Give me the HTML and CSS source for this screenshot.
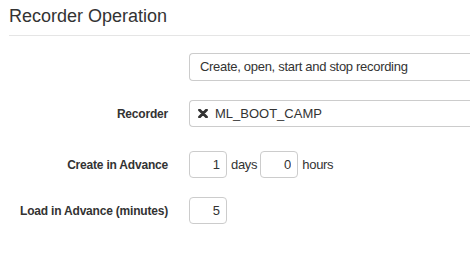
FILE: index.html
```html
<!DOCTYPE html>
<html lang="en">

<head>
    <meta charset="UTF-8">
    <meta name="viewport" content="width=device-width, initial-scale=1.0">
    <title>Recorder Operation</title>
    <link rel="stylesheet" href="styles.css">
</head>

<body>
    <div class="panel">
        <h1>Recorder Operation</h1>
        <form class="form-horizontal">
            <div class="form-row row-operation">
                <span class="control-label"></span>
                <div class="form-control wide">Create, open, start and stop recording</div>
            </div>
            <div class="form-row row-recorder">
                <label class="control-label">Recorder</label>
                <div class="form-control wide">
                    <svg class="icon-times" width="10" height="9" viewBox="0 0 10 9">
                        <path d="M1.5 1 L8.5 8 M8.5 1 L1.5 8" stroke="#333" stroke-width="2.8" stroke-linecap="round"/>
                    </svg>
                    ML_BOOT_CAMP
                </div>
            </div>
            <div class="form-row row-create">
                <label class="control-label">Create in Advance</label>
                <div class="inline-group">
                    <input class="form-control num" type="text" value="1">
                    <span>days</span>
                    <input class="form-control num" type="text" value="0">
                    <span>hours</span>
                </div>
            </div>
            <div class="form-row row-load">
                <label class="control-label">Load in Advance (minutes)</label>
                <div class="inline-group">
                    <input class="form-control num" type="text" value="5">
                </div>
            </div>
        </form>
    </div>
</body>

</html>
```

FILE: styles.css
```css
/* styles.css */
body {
    font-family: "Liberation Sans", Arial, sans-serif;
    margin: 0;
    background-color: #fff;
    color: #333;
    overflow: hidden;
}

.panel {
    padding: 0 0 0 9px;
}

h1 {
    font-size: 18px;
    font-weight: normal;
    line-height: 20px;
    margin: 0;
    padding: 6px 0 9px 0;
    border-bottom: 1px solid #e5e5e5;
}

.form-horizontal {
    margin-top: 17px;
}

.form-row {
    display: grid;
    grid-template-columns: 159px auto;
    column-gap: 21px;
    align-items: center;
}

.row-recorder {
    margin-top: 19px;
}

.row-create {
    margin-top: 24px;
}

.row-load {
    margin-top: 19px;
}

.control-label {
    font-size: 12px;
    font-weight: bold;
    text-align: right;
    letter-spacing: -0.2px;
}

.form-control {
    box-sizing: border-box;
    border: 1px solid #ccc;
    border-radius: 4px;
    font-family: "Liberation Sans", Arial, sans-serif;
    font-size: 13px;
    color: #333;
    background: #fff;
}

/* the wide fields run on past the right edge of the window */
.wide {
    width: 281px;
    height: 28px;
    line-height: 26px;
    padding: 0 10px;
    border-right: none;
    border-radius: 4px 0 0 4px;
    display: flex;
    align-items: center;
    gap: 7px;
    letter-spacing: -0.3px;
}

.row-recorder .wide {
    height: 27px;
    padding-left: 8px;
    letter-spacing: 0;
}

.icon-times {
    display: block;
}

.inline-group {
    display: flex;
    align-items: center;
    font-size: 13px;
    letter-spacing: -0.3px;
}

.inline-group span {
    margin: 0 3px 0 4px;
}

.num {
    width: 38px;
    height: 27px;
    padding: 0 6px;
    text-align: right;
}
```
